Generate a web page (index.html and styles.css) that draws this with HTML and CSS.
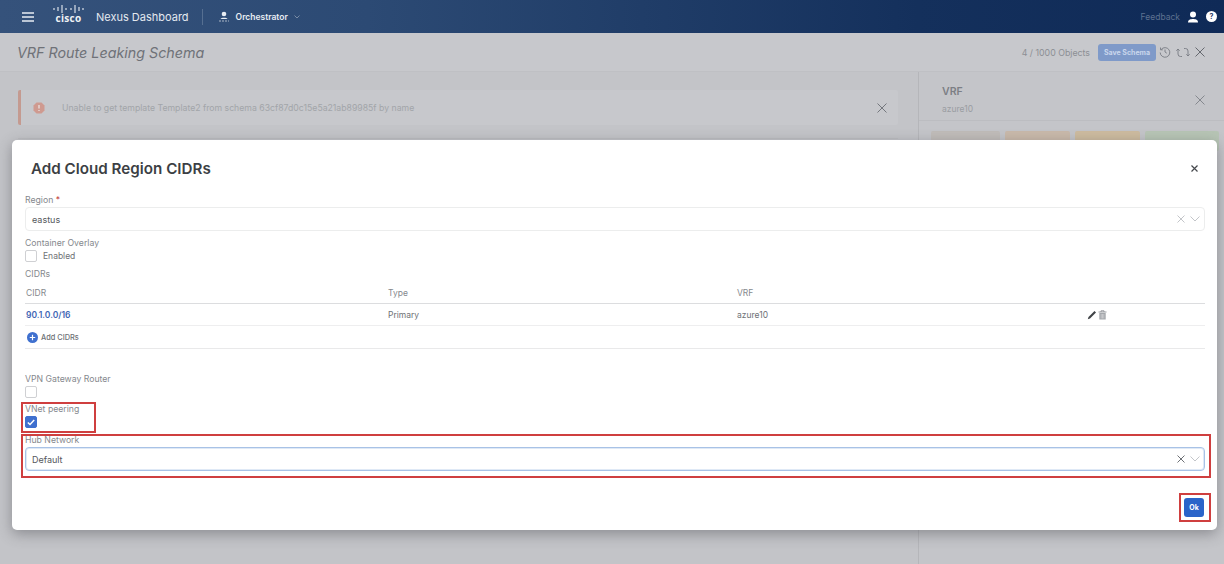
FILE: index.html
```html
<!DOCTYPE html>
<html lang="en">
<head>
<meta charset="utf-8">
<title>Add Cloud Region CIDRs</title>
<link rel="stylesheet" href="styles.css">
</head>
<body>
<div class="page">
  <header class="topbar">
    <svg class="burger" width="12" height="10" viewBox="0 0 12 10"><path d="M0 1h12M0 5h12M0 9h12" stroke="#e8edf3" stroke-width="1.5"/></svg>
    <div class="logo">
      <svg width="31" height="10" viewBox="0 0 31 10"><path d="M1 4v2M5 3v4M9 1v8M13 4v2M18 4v2M22 1v8M26 3v4M30 4v2" stroke="#e8edf3" stroke-width="1.1" fill="none"/></svg>
      <span class="logo-word">cisco</span>
    </div>
    <span class="brand">Nexus Dashboard</span>
    <span class="vsep"></span>
    <svg class="app-icon" width="12" height="11" viewBox="0 0 12 11"><circle cx="6" cy="3" r="2.3" fill="#e8edf3"/><path d="M2.5 8c.6-1.7 6.400-1.700 7 0z" fill="#e8edf3"/><path d="M1 10h10" stroke="#aab6c6" stroke-width="1" stroke-dasharray="2 1"/></svg>
    <span class="app-name">Orchestrator</span>
    <svg class="app-caret" width="6" height="4" viewBox="0 0 6 4"><path d="M.5.5 3 3 5.500.5" stroke="#8e9db3" fill="none" stroke-width=".8"/></svg>
    <span class="feedback">Feedback</span>
    <svg width="12" height="12" viewBox="0 0 12 12"><circle cx="6" cy="3.500" r="3" fill="#fff"/><path d="M1 11.500c0-3 2.500-3.500 5-3.500s5 .5 5 3.500z" fill="#fff"/></svg>
    <span class="help">?</span>
  </header>

  <div class="subbar">
    <h1 class="schema-title">VRF Route Leaking Schema</h1>
    <span class="objects">4 / 1000 Objects</span>
    <span class="save">Save Schema</span>
    <svg class="tool-history" width="12" height="12" viewBox="0 0 12 12"><path d="M2.200 3.500A4.800 4.800 0 1 1 1.200 6.500M1.500 1.500v2.300h2.300M6 3.500V6l1.800 1.200" fill="none" stroke="#777b82" stroke-width=".9"/></svg>
    <svg class="tool-sync" width="14" height="11" viewBox="0 0 14 11"><path d="M6 9.500H4.500A2.500 2.500 0 0 1 2 7V2M.3 3.700 2 2l1.700 1.700M8 1.500h1.500A2.500 2.500 0 0 1 12 4v5M10.300 7.300 12 9l1.700-1.700" fill="none" stroke="#777b82" stroke-width=".9"/></svg>
    <svg width="10" height="10" viewBox="0 0 10 10"><path d="M.5.5l9 9M9.500.5l-9 9" stroke="#66696f" stroke-width="1"/></svg>
  </div>

  <div class="workspace">
    <main class="main-col">
      <div class="alert">
        <svg width="12" height="12" viewBox="0 0 12 12"><path d="M3.500.5h5l3 3v5l-3 3h-5l-3-3v-5z" fill="#cf9a90"/><path d="M6 3v3.500M6 8v1" stroke="#eee" stroke-width="1.100"/></svg>
        <span class="alert-text">Unable to get template Template2 from schema 63cf87d0c15e5a21ab89985f by name</span>
        <svg width="10" height="10" viewBox="0 0 10 10"><path d="M.5.5l9 9M9.500.5l-9 9" stroke="#74777d" stroke-width="1"/></svg>
      </div>
      <div class="main-rule"></div>
    </main>
    <aside class="side-col">
      <div class="side-head">
        <div>
          <div class="side-title">VRF</div>
          <div class="side-sub">azure10</div>
        </div>
        <svg width="10" height="10" viewBox="0 0 10 10"><path d="M.5.5l9 9M9.500.5l-9 9" stroke="#85888e" stroke-width="1"/></svg>
      </div>
      <div class="chips">
        <span class="chip chip-grey"></span>
        <span class="chip chip-tan"></span>
        <span class="chip chip-orange"></span>
        <span class="chip chip-green"></span>
      </div>
    </aside>
  </div>

  <section class="dialog">
    <div class="dialog-head">
      <h2 class="dialog-title">Add Cloud Region CIDRs</h2>
      <svg class="dialog-close" width="7" height="7" viewBox="0 0 7 7"><path d="M.5.5l6 6M6.500.5l-6 6" stroke="#45484d" stroke-width="1.200"/></svg>
    </div>
    <div class="form">
      <label class="field-label label-region">Region <b class="req">*</b></label>
      <div class="select">
        <span>eastus</span>
        <svg class="sel-x" width="8" height="8" viewBox="0 0 8 8"><path d="M.5.5l7 7M7.500.5l-7 7" stroke="#c3c5c9" stroke-width="1"/></svg>
        <svg width="10" height="6" viewBox="0 0 10 6"><path d="M.5.5 5 5 9.500.5" stroke="#c3c5c9" fill="none" stroke-width="1"/></svg>
      </div>
      <label class="field-label label-overlay">Container Overlay</label>
      <div class="check-row">
        <span class="check"></span>
        <span class="check-text">Enabled</span>
      </div>
      <label class="field-label label-cidrs">CIDRs</label>
      <div class="table">
        <div class="tr th">
          <span class="c1">CIDR</span><span class="c2">Type</span><span class="c3">VRF</span><span class="c4"></span>
        </div>
        <div class="tr td">
          <a class="c1 link">90.1.0.0/16</a><span class="c2">Primary</span><span class="c3">azure10</span>
          <span class="c4 actions">
            <svg width="10" height="10" viewBox="0 0 10 10"><path d="M.8 9.200 1.500 7 7.500 1l1.500 1.500-6 6z" fill="#3f4246"/></svg>
            <svg width="9" height="10" viewBox="0 0 9 10"><path d="M.5 2h8M3 2V.8h3V2" stroke="#8d9095" fill="none" stroke-width=".9"/><path d="M1.300 3h6.400v6.500H1.300z" fill="#a5a8ac"/><path d="M3.200 4v4.500M4.500 4v4.500M5.800 4v4.500" stroke="#e6e7e8" stroke-width=".5"/></svg>
          </span>
        </div>
        <div class="tr add">
          <svg width="11" height="11" viewBox="0 0 11 11"><circle cx="5.500" cy="5.500" r="5.500" fill="#3f70cf"/><path d="M5.500 2.800v5.400M2.800 5.500h5.400" stroke="#fff" stroke-width="1.200"/></svg>
          <span>Add CIDRs</span>
        </div>
      </div>
      <label class="field-label label-vpn">VPN Gateway Router</label>
      <span class="check check-solo"></span>
      <label class="field-label label-vnet">VNet peering</label>
      <span class="check check-solo checked">
        <svg width="8" height="7" viewBox="0 0 8 7"><path d="M.8 3.500 3 5.500 7.200 1" stroke="#fff" fill="none" stroke-width="1.500"/></svg>
      </span>
      <label class="field-label label-hub">Hub Network</label>
      <div class="select select-focus">
        <span>Default</span>
        <svg class="sel-x" width="8" height="8" viewBox="0 0 8 8"><path d="M.5.5l7 7M7.500.5l-7 7" stroke="#6d7075" stroke-width="1"/></svg>
        <svg width="10" height="6" viewBox="0 0 10 6"><path d="M.5.5 5 5 9.500.5" stroke="#c3c5c9" fill="none" stroke-width="1"/></svg>
      </div>
      <div class="dialog-foot">
        <button class="ok">Ok</button>
      </div>
    </div>
    <span class="mark mark-vnet"></span>
    <span class="mark mark-hub"></span>
    <span class="mark mark-ok"></span>
  </section>
</div>
</body>
</html>
```

FILE: styles.css
```css
* { box-sizing: border-box; }
html, body { margin: 0; padding: 0; }
body { font-family: Inter, "Liberation Sans", sans-serif; background: #c3c4c8; }
.page { position: relative; width: 1224px; height: 564px; overflow: hidden; display: flex; flex-direction: column; }

.topbar { height: 33px; flex: none; display: flex; align-items: center; padding: 0 7px 0 22px; color: #e8edf3; background: linear-gradient(90deg, #35527b 0%, #2c4a74 30%, #14305c 75%, #0f2a57 100%); }
.burger { margin-right: 19px; }
.logo { display: flex; flex-direction: column; align-items: center; width: 31px; margin-top: -6px; }
.logo-word { font: 700 10px/9px "Open Sans", sans-serif; letter-spacing: .3px; color: #eef1f5; }
.brand { margin-left: 12px; font-size: 11px; color: #e4e9f0; white-space: nowrap; }
.vsep { width: 1px; height: 16px; background: #566f91; margin: 0 15px 0 13px; }
.app-icon { margin-right: 6px; }
.app-name { font-size: 8.500px; font-weight: 600; color: #e8edf3; }
.app-caret { margin-left: 6px; }
.feedback { margin-left: auto; margin-right: 7px; font-size: 8.500px; color: #5d7190; }
.help { width: 11px; height: 11px; margin-left: 7px; border-radius: 50%; background: #fff; color: #1a3560; font-size: 7px; font-weight: 700; line-height: 11px; text-align: center; }

.subbar { height: 39px; flex: none; display: flex; align-items: center; padding: 0 19px 0 17px; background: #c7c8cc; border-bottom: 1px solid #bfc0c4; }
.schema-title { margin: 0 auto 0 0; font-size: 14.300px; font-weight: 400; font-style: italic; color: #6f7278; }
.objects { margin-right: 8px; font-size: 8.800px; color: #8c8f94; }
.save { width: 58px; height: 17px; border-radius: 3px; background: #7f9ac9; color: #c9d6ec; font-size: 7px; font-weight: 700; line-height: 17px; text-align: center; }
.tool-history { margin-left: 3px; }
.tool-sync { margin: 0 5px; }

.workspace { flex: 1; display: flex; min-height: 0; }
.main-col { width: 919px; flex: none; padding: 18px 20px 0 18px; border-right: 1px solid #b5b6ba; }
.alert { height: 35px; display: flex; align-items: center; padding: 0 11px 0 12px; background: #c7c8cc; border-left: 3px solid #c49a90; border-radius: 2px; }
.alert-text { flex: 1; margin-left: 17px; font-size: 8.700px; color: #a2a5a9; }
.main-rule { height: 1px; margin-top: 13px; background: #bcbdc1; }
.side-col { flex: 1; background: #c4c5c9; }
.side-head { height: 49px; display: flex; justify-content: space-between; align-items: center; padding: 7px 19px 0 23px; border-bottom: 1px solid #bcbdc1; }
.side-title { font-size: 10.500px; font-weight: 600; color: #7c7f85; }
.side-sub { margin-top: 6px; font-size: 8.500px; color: #9a9da2; }
.chips { display: flex; gap: 5px; padding: 10px 3px 0 12px; }
.chip { height: 20px; border-radius: 2px; }
.chip-grey { width: 69px; background: #c0bcb9; }
.chip-tan { width: 65px; background: #c9b9aa; }
.chip-orange { width: 65px; background: #cdbb9f; }
.chip-green { width: 74px; background: #b7c5b5; }

.dialog { position: absolute; left: 12px; top: 140px; width: 1205px; height: 390px; background: #fff; border-radius: 5px; box-shadow: 0 4px 14px rgba(70, 72, 78, .45); }
.dialog-head { height: 50px; display: flex; justify-content: space-between; align-items: center; padding: 6px 19px 0 19px; }
.dialog-title { margin: 0; font-size: 15.200px; font-weight: 600; color: #3c3f44; }
.form { display: flex; flex-direction: column; align-items: flex-start; padding: 0 12px 0 13px; }
.field-label { display: block; font-size: 8.700px; line-height: 11px; color: #85888d; }
.label-region { margin-top: 5px; }
.label-overlay { margin-top: 7px; }
.label-cidrs { margin-top: 7px; }
.label-vpn { margin-top: 25px; }
.label-vnet { margin-top: 6px; }
.label-hub { margin-top: 7px; }
.req { color: #c4453f; font-weight: 400; }
.select { width: 100%; height: 24px; display: flex; align-items: center; gap: 4px; margin-top: 1px; padding: 0 4px 0 6px; border: 1px solid #eceded; border-radius: 4px; font-size: 9px; color: #55585d; }
.select span { flex: 1; }
.sel-x { margin-right: 1px; }
.select-focus { border-color: #a8c2e6; box-shadow: inset 0 0 0 1px #dfe9f6; }
.check-row { display: flex; align-items: center; gap: 6px; margin-top: 1px; }
.check { width: 12px; height: 12px; flex: none; border: 1px solid #cfd0d3; border-radius: 2px; background: #fff; display: flex; align-items: center; justify-content: center; }
.check-solo { margin-top: 1px; }
.check.checked { background: #3f70cf; border-color: #3f70cf; }
.check-text { font-size: 8.500px; color: #6e7176; }

.table { width: 100%; margin-top: 1px; }
.tr { display: flex; align-items: center; padding: 0 1px 0 1px; font-size: 8.500px; }
.th { height: 23px; color: #85888d; border-bottom: 1px solid #dcdddf; padding-top: 2px; }
.td { height: 22px; color: #6e7176; border-bottom: 1px solid #eeeeef; }
.add { height: 23px; gap: 3px; padding-left: 2px; font-size: 7.400px; font-weight: 500; color: #6e7176; border-bottom: 1px solid #e9e9ea; }
.c1 { width: 362px; }
.c2 { width: 349px; }
.c3 { width: 350px; }
.c4 { flex: 1; }
.link { color: #3f66b4; font-weight: 600; }
.actions { display: flex; align-items: center; gap: 1px; }

.dialog-foot { align-self: flex-end; margin-top: 27px; padding-right: 1px; }
.ok { display: block; width: 20px; height: 19px; padding: 0; border: 0; border-radius: 3px; background: #2a64c9; color: #fff; font: 700 7px Inter, sans-serif; }

.mark { position: absolute; border: 2px solid #cf3f3f; pointer-events: none; }
.mark-vnet { left: 9px; top: 262px; width: 75px; height: 31px; }
.mark-hub { left: 9px; top: 294px; width: 1190px; height: 44px; }
.mark-ok { left: 1167px; top: 353px; width: 32px; height: 29px; }
```
